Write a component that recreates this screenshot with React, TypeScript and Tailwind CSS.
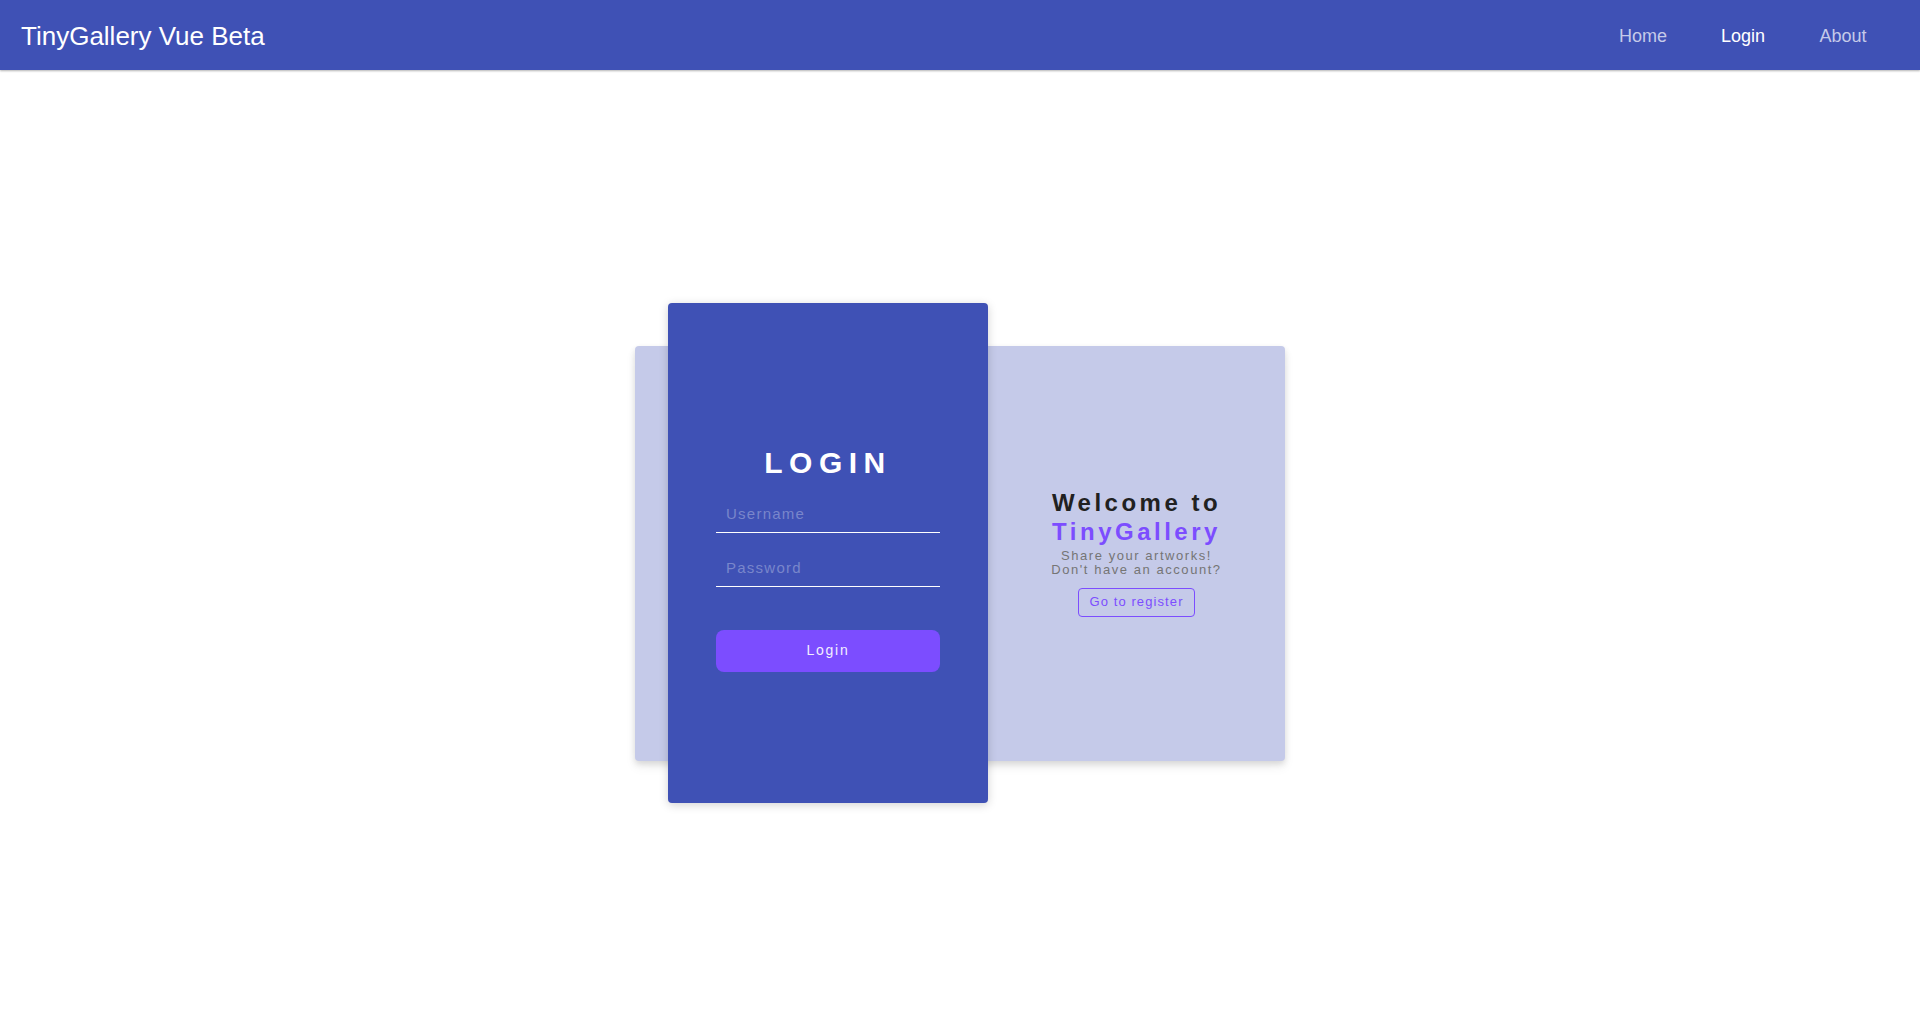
import React from "react";

export default function App() {
  return (
    <div className="min-h-screen flex flex-col bg-white" style={{ fontFamily: '"Liberation Sans", Arial, sans-serif' }}>
      <header className="h-[70px] shrink-0 bg-[#3f51b5] flex items-center justify-between pl-[21px] pr-[27px] pt-[2px] shadow-[0_1px_2px_rgba(0,0,0,0.3)] relative z-10">
        <div className="text-white text-[26px] leading-none">TinyGallery Vue Beta</div>
        <nav className="flex items-center text-[18px]">
          <a className="w-[100px] text-center text-[#c5cae9]">Home</a>
          <a className="w-[100px] text-center text-white">Login</a>
          <a className="w-[100px] text-center text-[#c5cae9]">About</a>
        </nav>
      </header>
      <main className="h-[965px] flex items-center justify-center pt-[1px]">
        <div className="w-[650px] h-[415px] bg-[#c5cae9] rounded-[4px] flex items-center shadow-[0_3px_6px_rgba(0,0,0,0.12),0_6px_12px_rgba(0,0,0,0.06)]">
          <div className="w-[33px] shrink-0" />
          <div className="w-[320px] h-[500px] shrink-0 bg-[#3f51b5] rounded-[4px] flex flex-col justify-center px-[48px] pt-[10px] shadow-[0_2px_10px_rgba(0,0,0,0.18)]">
            <h1 className="text-white font-bold text-[30px] leading-[36px] tracking-[6.5px] text-center mb-[18px]">LOGIN</h1>
            <input
              placeholder="Username"
              className="block w-full h-[34px] pb-[4px] pl-[10px] bg-transparent border-b border-white text-white text-[15px] tracking-[1.25px] outline-none placeholder:text-[#7986cb]"
            />
            <input
              type="password"
              placeholder="Password"
              className="block w-full h-[34px] mt-[20px] pb-[4px] pl-[10px] bg-transparent border-b border-white text-white text-[15px] tracking-[1.25px] outline-none placeholder:text-[#7986cb]"
            />
            <button className="mt-[43px] h-[42px] w-full rounded-[8px] bg-[#7c4dff] text-[#f3eeff] text-[14px] tracking-[1.7px]">
              Login
            </button>
          </div>
          <div className="flex-1 flex flex-col items-center justify-center text-center pb-[2px]">
            <div className="text-[24px] leading-[29px] font-bold tracking-[3.5px] text-[#212121]">Welcome to</div>
            <div className="text-[24px] leading-[29px] font-bold tracking-[3.5px] text-[#7c4dff]">TinyGallery</div>
            <div className="mt-[3px] text-[13px] leading-[14px] tracking-[1.55px] text-[#757575]">Share your artworks!</div>
            <div className="text-[13px] leading-[14px] tracking-[1.55px] text-[#757575]">Don't have an account?</div>
            <button className="mt-[11px] h-[29px] px-[10px] border border-[#7c4dff] rounded-[4px] text-[#7c4dff] text-[13px] tracking-[1.1px]">
              Go to register
            </button>
          </div>
        </div>
      </main>
    </div>
  );
}
